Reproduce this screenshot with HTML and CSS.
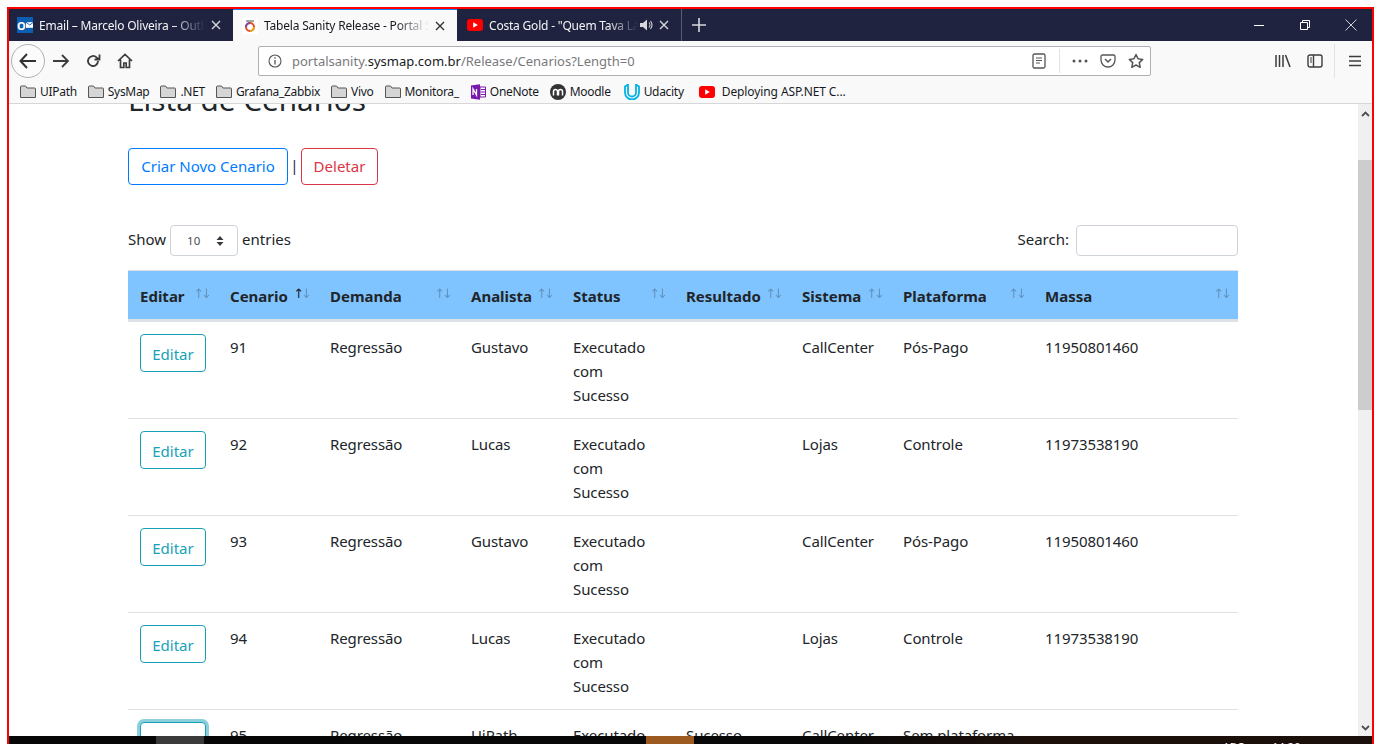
FILE: index.html
```html
<!DOCTYPE html>
<html lang="pt-BR">
<head>
<meta charset="utf-8">
<title>Tabela Sanity Release - Portal Sanity</title>
<link rel="stylesheet" href="styles.css">
</head>
<body>
<div class="window">
  <div class="tabbar">
    <div class="tab">
      <span class="fav outlook"><b>O</b><svg width="8" height="8" viewBox="0 0 8 8"><rect x="0" y="1" width="8" height="6" fill="#fff"/><path d="M0 1l4 3 4-3" fill="none" stroke="#0a5fb0"/></svg></span>
      <span class="tab-label">Email – Marcelo Oliveira – Outlook</span>
      <svg class="tab-x" width="10" height="10" viewBox="0 0 10 10"><path d="M1 1l8 8M9 1l-8 8"/></svg>
    </div>
    <div class="tab active">
      <span class="fav"><svg width="16" height="16" viewBox="0 0 16 16"><rect width="16" height="16" fill="#fff"/><circle cx="8" cy="9" r="4" fill="none" stroke="#e2502a" stroke-width="2"/><path d="M4 9a4 4 0 0 1 4-4" fill="none" stroke="#7b4fa0" stroke-width="2"/><path d="M8 13a4 4 0 0 0 4-4" fill="none" stroke="#e8a91c" stroke-width="2"/><path d="M4 3h8" stroke="#888" stroke-width="1.5"/></svg></span>
      <span class="tab-label">Tabela Sanity Release - Portal Sanity</span>
      <svg class="tab-x" width="10" height="10" viewBox="0 0 10 10"><path d="M1 1l8 8M9 1l-8 8"/></svg>
    </div>
    <div class="tab">
      <span class="fav"><svg width="16" height="12" viewBox="0 0 16 12"><rect width="16" height="12" rx="3" fill="#f00"/><path d="M6.2 3.2l4.6 2.8-4.6 2.8z" fill="#fff"/></svg></span>
      <span class="tab-label short">Costa Gold - "Quem Tava Lá"</span>
      <svg class="tab-sound" width="14" height="14" viewBox="0 0 14 14"><path d="M1 5h3l4-3.5v11L4 9H1z" fill="#d8d8dc"/><path d="M10 4.5c1.2 1.3 1.2 3.7 0 5M11.5 3c2 2.2 2 5.800 0 8" fill="none" stroke="#d8d8dc" stroke-width="1.100"/></svg>
      <svg class="tab-x" width="10" height="10" viewBox="0 0 10 10"><path d="M1 1l8 8M9 1l-8 8"/></svg>
    </div>
    <div class="newtab"><svg width="14" height="14" viewBox="0 0 14 14"><path d="M7 0v14M0 7h14" stroke="#d8d8dc" stroke-width="1.600"/></svg></div>
    <div class="winctrls">
      <svg width="12" height="12" viewBox="0 0 12 12"><path d="M1 6.500h10" stroke="#fff"/></svg>
      <svg width="12" height="12" viewBox="0 0 12 12"><path d="M3.500 3.500V1.500h7v7h-2M1.500 3.500h7v7h-7z" fill="none" stroke="#fff"/></svg>
      <svg width="12" height="12" viewBox="0 0 12 12"><path d="M.5.500l11 11M11.500.500l-11 11" stroke="#fff" stroke-width=".8"/></svg>
    </div>
  </div>

  <div class="toolbar">
    <span class="backbtn"><svg width="18" height="16" viewBox="0 0 18 16"><path d="M8 1L1.500 8 8 15M1.500 8H17" fill="none" stroke="#333" stroke-width="2"/></svg></span>
    <svg class="tool" width="16" height="14" viewBox="0 0 16 14"><path d="M9 1l6 6-6 6M15 7H0" fill="none" stroke="#3c3c3e" stroke-width="1.800"/></svg>
    <svg class="tool" width="16" height="16" viewBox="0 0 16 16"><path d="M13 8a5 5 0 1 1-1.500-3.600L14 6.500M14.500 1.500v5h-5" fill="none" stroke="#3c3c3e" stroke-width="1.800"/></svg>
    <svg class="tool" width="16" height="16" viewBox="0 0 16 16"><path d="M1 8l7-6.500L15 8M3.500 6.500V14.500h3.300v-4.500h2.400v4.500h3.300V6.500" fill="none" stroke="#3c3c3e" stroke-width="1.700"/></svg>
    <div class="urlbar">
      <svg class="url-info" width="14" height="14" viewBox="0 0 14 14"><circle cx="7" cy="7" r="6" fill="none" stroke="#55555a" stroke-width="1.100"/><path d="M7 6v4.500M7 3.300v1.500" stroke="#55555a" stroke-width="1.300"/></svg>
      <span class="url"><span class="dim">portalsanity.</span>sysmap.com.br<span class="dim">/Release/Cenarios?Length=0</span></span>
      <svg class="url-ic" width="14" height="16" viewBox="0 0 14 16"><rect x="1" y="1" width="12" height="14" rx="1.500" fill="none" stroke="#55555a" stroke-width="1.300"/><path d="M4 5h6M4 7.500h6M4 10h4" stroke="#55555a"/></svg>
      <span class="url-sep"></span>
      <svg class="url-ic dots" width="16" height="4" viewBox="0 0 16 4"><circle cx="2" cy="2" r="1.500" fill="#55555a"/><circle cx="8" cy="2" r="1.500" fill="#55555a"/><circle cx="14" cy="2" r="1.500" fill="#55555a"/></svg>
      <svg class="url-ic" width="16" height="14" viewBox="0 0 16 14"><path d="M2.500 1h11A1.500 1.500 0 0 1 15 2.500V6a7 7 0 0 1-14 0V2.500A1.500 1.500 0 0 1 2.500 1z" fill="none" stroke="#55555a" stroke-width="1.300"/><path d="M5 5l3 3 3-3" fill="none" stroke="#55555a" stroke-width="1.500"/></svg>
      <svg class="url-ic" width="16" height="16" viewBox="0 0 16 16"><path d="M8 1.500l2 4.300 4.700.6-3.400 3.200.9 4.700L8 12l-4.200 2.300.9-4.700L1.300 6.400 6 5.800z" fill="none" stroke="#55555a" stroke-width="1.500" stroke-linejoin="round"/></svg>
    </div>
    <div class="tools-right">
      <svg width="16" height="14" viewBox="0 0 16 14"><path d="M1 1v12M4.500 1v12M8 1v12M10.500 1l4.500 12" stroke="#3c3c3e" stroke-width="1.500"/></svg>
      <svg width="16" height="14" viewBox="0 0 16 14"><rect x="1" y="1" width="14" height="12" rx="2" fill="none" stroke="#3c3c3e" stroke-width="1.400"/><path d="M6.500 1v12" stroke="#3c3c3e" stroke-width="1.400"/><path d="M3 4h2M3 6h2M3 8h2" stroke="#3c3c3e"/></svg>
      <span class="tool-sep"></span>
      <svg width="12" height="12" viewBox="0 0 12 12"><path d="M0 1.500h12M0 6h12M0 10.500h12" stroke="#3c3c3e" stroke-width="1.600"/></svg>
    </div>
  </div>

  <div class="bookmarks">
    <span class="bm"><svg class="folder" width="16" height="14" viewBox="0 0 16 14"><path d="M.5 12.500V2a1 1 0 0 1 1-1h4l1.500 2h7.500a1 1 0 0 1 1 1v8.500z" fill="#d5d5d5" stroke="#555"/></svg>UIPath</span>
    <span class="bm"><svg class="folder" width="16" height="14" viewBox="0 0 16 14"><path d="M.5 12.500V2a1 1 0 0 1 1-1h4l1.500 2h7.500a1 1 0 0 1 1 1v8.500z" fill="#d5d5d5" stroke="#555"/></svg>SysMap</span>
    <span class="bm"><svg class="folder" width="16" height="14" viewBox="0 0 16 14"><path d="M.5 12.500V2a1 1 0 0 1 1-1h4l1.500 2h7.500a1 1 0 0 1 1 1v8.500z" fill="#d5d5d5" stroke="#555"/></svg>.NET</span>
    <span class="bm"><svg class="folder" width="16" height="14" viewBox="0 0 16 14"><path d="M.5 12.500V2a1 1 0 0 1 1-1h4l1.500 2h7.500a1 1 0 0 1 1 1v8.500z" fill="#d5d5d5" stroke="#555"/></svg>Grafana_Zabbix</span>
    <span class="bm"><svg class="folder" width="16" height="14" viewBox="0 0 16 14"><path d="M.5 12.500V2a1 1 0 0 1 1-1h4l1.500 2h7.500a1 1 0 0 1 1 1v8.500z" fill="#d5d5d5" stroke="#555"/></svg>Vivo</span>
    <span class="bm"><svg class="folder" width="16" height="14" viewBox="0 0 16 14"><path d="M.5 12.500V2a1 1 0 0 1 1-1h4l1.500 2h7.500a1 1 0 0 1 1 1v8.500z" fill="#d5d5d5" stroke="#555"/></svg>Monitora_</span>
    <span class="bm"><svg class="folder" width="16" height="16" viewBox="0 0 16 16"><path d="M1 1.500l9-1.200v15.400l-9-1.200z" fill="#7719aa"/><path d="M10 3h5.500v10H10z" fill="#fff" stroke="#7719aa"/><path d="M3 11V5l3.500 6V5" fill="none" stroke="#fff" stroke-width="1.300"/><path d="M11 5.500h4M11 8h4M11 10.500h4" stroke="#7719aa"/></svg>OneNote</span>
    <span class="bm"><svg class="folder" width="16" height="16" viewBox="0 0 16 16"><circle cx="8" cy="8" r="8" fill="#333"/><path d="M3.500 11.500V7.500a2 2 0 0 1 4 0v4M8.500 11.500V7.500a2 2 0 0 1 4 0v4" fill="none" stroke="#fff" stroke-width="1.500"/></svg>Moodle</span>
    <span class="bm udacity"><svg class="folder" width="16" height="16" viewBox="0 0 16 16"><path d="M1 2.500v6a7 7 0 0 0 14 0v-6l-3-2v8a4 4 0 0 1-8 0v-8z" fill="none" stroke="#02b3e4" stroke-width="1.800"/></svg>Udacity</span>
    <span class="bm yt"><svg class="folder" width="16" height="12" viewBox="0 0 16 12"><rect width="16" height="12" rx="3" fill="#f00"/><path d="M6.200 3.200l4.600 2.800-4.600 2.800z" fill="#fff"/></svg>Deploying ASP.NET C...</span>
  </div>

  <div class="viewport">
    <main class="page">
      <h2 class="title">Lista de Cenarios</h2>
      <p class="actions"><a class="btn btn-blue">Criar Novo Cenario</a><span class="pipe">|</span><a class="btn btn-red">Deletar</a></p>
      <div class="dt-controls">
        <label class="dt-length">Show <span class="select">10<svg width="8" height="12" viewBox="0 0 8 12"><path d="M4 1l3.500 4h-7zM4 11L.5 7h7z" fill="#343a40"/></svg></span> entries</label>
        <label class="dt-search">Search: <span class="input"></span></label>
      </div>
      <table class="grid">
        <colgroup>
          <col class="c1"><col class="c2"><col class="c3"><col class="c4"><col class="c5"><col class="c6"><col class="c7"><col class="c8"><col class="c9">
        </colgroup>
        <thead>
          <tr>
            <th>Editar<span class="sort"><i>↑</i><i>↓</i></span></th>
            <th>Cenario<span class="sort asc"><i>↑</i><i>↓</i></span></th>
            <th>Demanda<span class="sort"><i>↑</i><i>↓</i></span></th>
            <th>Analista<span class="sort"><i>↑</i><i>↓</i></span></th>
            <th>Status<span class="sort"><i>↑</i><i>↓</i></span></th>
            <th>Resultado<span class="sort"><i>↑</i><i>↓</i></span></th>
            <th>Sistema<span class="sort"><i>↑</i><i>↓</i></span></th>
            <th>Plataforma<span class="sort"><i>↑</i><i>↓</i></span></th>
            <th>Massa<span class="sort"><i>↑</i><i>↓</i></span></th>
          </tr>
        </thead>
        <tbody>
          <tr><td><a class="btn btn-teal">Editar</a></td><td>91</td><td>Regressão</td><td>Gustavo</td><td>Executado com Sucesso</td><td></td><td>CallCenter</td><td>Pós-Pago</td><td>11950801460</td></tr>
          <tr><td><a class="btn btn-teal">Editar</a></td><td>92</td><td>Regressão</td><td>Lucas</td><td>Executado com Sucesso</td><td></td><td>Lojas</td><td>Controle</td><td>11973538190</td></tr>
          <tr><td><a class="btn btn-teal">Editar</a></td><td>93</td><td>Regressão</td><td>Gustavo</td><td>Executado com Sucesso</td><td></td><td>CallCenter</td><td>Pós-Pago</td><td>11950801460</td></tr>
          <tr><td><a class="btn btn-teal">Editar</a></td><td>94</td><td>Regressão</td><td>Lucas</td><td>Executado com Sucesso</td><td></td><td>Lojas</td><td>Controle</td><td>11973538190</td></tr>
          <tr><td><a class="btn btn-teal focus">Editar</a></td><td>95</td><td>Regressão</td><td>UiPath</td><td>Executado com Sucesso</td><td>Sucesso</td><td>CallCenter</td><td>Sem plataforma</td><td></td></tr>
        </tbody>
      </table>
    </main>
    <div class="scrollbar">
      <svg class="arrow" width="9" height="6" viewBox="0 0 9 6"><path d="M1 5l3.500-3.500L8 5" fill="none" stroke="#505050" stroke-width="1.800"/></svg>
      <div class="thumb"></div>
      <svg class="arrow down" width="9" height="6" viewBox="0 0 9 6"><path d="M1 1l3.500 3.500L8 1" fill="none" stroke="#505050" stroke-width="1.800"/></svg>
    </div>
  </div>

  <div class="taskbar">
    <span class="task grey"></span>
    <span class="task brown"></span>
    <span class="tray">
      <span class="clip">ABC</span>
      <span class="clip">14:26</span>
    </span>
  </div>
</div>
</body>
</html>
```

FILE: styles.css
```css
* { box-sizing: border-box; }
html, body { margin: 0; height: 100%; background: #fff; overflow: hidden; }
body {
  padding: 7px 8px 0 7px;
  font-family: "Noto Sans", "Open Sans", "Liberation Sans", sans-serif;
  color: #212529;
}
.window {
  height: 737px;
  border: solid #f00;
  border-width: 2px 2px 0 2px;
  display: flex;
  flex-direction: column;
  overflow: hidden;
  background: #fff;
}

/* tabs */
.tabbar {
  height: 32px;
  flex: none;
  background: #202340;
  display: flex;
  align-items: stretch;
}
.tab {
  width: 224px;
  display: flex;
  align-items: center;
  padding: 0 12px 0 8px;
  color: #f4f4f6;
  font-size: 12px;
  letter-spacing: -.2px;
}
.tab:nth-child(3) { width: 225px; border-right: 1px solid #5a5c70; padding-left: 10px; padding-right: 12px; }
.tab.active {
  background: #f9f9fa;
  color: #18191e;
  border-top: 1px solid #0a84ff;
  padding-left: 9px;
}
.fav { width: 16px; height: 16px; flex: none; display: flex; align-items: center; justify-content: center; margin-right: 6px; }
.outlook { background: #0a5fb0; color: #fff; font-size: 11px; gap: 0; overflow: hidden; }
.outlook b { line-height: 1; margin-right: 0; }
.tab-label {
  flex: 1;
  min-width: 0;
  white-space: nowrap;
  overflow: hidden;
  -webkit-mask-image: linear-gradient(to right, #000 80%, transparent 100%);
  mask-image: linear-gradient(to right, #000 80%, transparent 100%);
}
.tab-x { flex: none; margin-left: 6px; fill: none; stroke: #d8d8dc; stroke-width: 1.400; }
.tab.active .tab-x { stroke: #333; }
.tab-sound { flex: none; margin-left: 1px; }
.newtab { width: 34px; display: flex; align-items: center; justify-content: center; }
.winctrls {
  margin-left: auto;
  display: flex;
  align-items: center;
  gap: 34px;
  padding-right: 15px;
}

/* toolbar */
.toolbar {
  height: 40px;
  flex: none;
  background: #f9f9fa;
  display: flex;
  align-items: center;
  padding: 0 11px 0 2px;
}
.backbtn {
  width: 34px;
  height: 34px;
  border: 1px solid #b1b1b3;
  border-radius: 50%;
  background: #fbfbfb;
  display: flex;
  align-items: center;
  justify-content: center;
  margin-right: 8px;
}
.tool { margin-right: 16px; flex: none; }
.urlbar {
  width: 893px;
  height: 30px;
  margin-left: 109px;
  background: #fff;
  border: 1px solid #b1b1b3;
  border-radius: 2px;
  display: flex;
  align-items: center;
  padding: 0 6px 0 9px;
}
.url-info { flex: none; margin-right: 10px; }
.url { flex: 1; font-size: 13px; color: #18191e; white-space: nowrap; }
.dim { color: #79797c; }
.url-ic { flex: none; margin-left: 12px; }
.url-sep { width: 1px; height: 24px; background: #e2e2e3; margin-left: 13px; }
.tools-right {
  margin-left: auto;
  display: flex;
  align-items: center;
  gap: 16px;
}
.tool-sep { width: 1px; height: 34px; background: #e2e2e3; margin: 0 -2px 0 -5px; }

/* bookmarks */
.bookmarks {
  height: 23px;
  flex: none;
  background: #f9f9fa;
  border-bottom: 1px solid #d7d7db;
  display: flex;
  align-items: center;
  padding: 0 0 1px 11px;
  font-size: 12px;
  letter-spacing: -.3px;
  color: #18191e;
  gap: 11px;
}
.bm { display: flex; align-items: center; white-space: nowrap; }
.folder { flex: none; margin-right: 4px; }
.udacity { margin-left: 2px; }
.yt { margin-left: 4px; letter-spacing: -.1px; }
.yt .folder { margin-right: 7px; }

/* page */
.viewport {
  flex: 1;
  min-height: 0;
  display: flex;
  overflow: hidden;
  background: #fff;
}
.page {
  flex: 1;
  min-width: 0;
  padding-left: 119px;
  font-size: 15px;
  overflow: hidden;
}
.title {
  margin: -19px 0 33px;
  font-size: 29.700px;
  font-weight: 400;
  line-height: 30px;
  height: 30px;
}
.actions {
  margin: 0 0 40px;
  display: flex;
  align-items: center;
  height: 37px;
  width: 1110px;
}
.pipe { width: 13px; text-align: center; margin-bottom: 4px; color: #1c2c5c; font-size: 15px; }
.btn {
  display: inline-flex;
  align-items: center;
  justify-content: center;
  border: 1px solid;
  border-radius: 4px;
  height: 100%;
  font-size: 15px;
  background: #fff;
  white-space: nowrap;
}
.btn-blue { width: 160px; color: #007bff; border-color: #007bff; padding-bottom: 1px; }
.btn-red { width: 77px; color: #dc3545; border-color: #dc3545; padding-bottom: 1px; }

.dt-controls {
  width: 1110px;
  height: 31px;
  margin-bottom: 14px;
  display: flex;
  justify-content: space-between;
  align-items: flex-start;
}
.dt-length, .dt-search { display: flex; align-items: flex-start; gap: 4px; line-height: 29px; }
.select {
  width: 68px;
  height: 31px;
  border: 1px solid #ced4da;
  border-radius: 4px;
  display: flex;
  align-items: center;
  justify-content: space-between;
  padding: 0 13px 0 16px;
  font-size: 11.500px;
  color: #495057;
}
.input {
  width: 162px;
  height: 31px;
  border: 1px solid #ced4da;
  border-radius: 4px;
  margin-left: 3px;
}

.grid {
  width: 1110px;
  table-layout: fixed;
  border-collapse: separate;
  border-spacing: 0;
}
.c1 { width: 90px; } .c2 { width: 100px; } .c3 { width: 141px; }
.c4 { width: 102px; } .c5 { width: 113px; } .c6 { width: 116px; }
.c7 { width: 101px; } .c8 { width: 142px; } .c9 { width: 205px; }
.grid th {
  height: 52px;
  background: #80c4ff;
  border-top: 1px solid #dee2e6;
  border-bottom: 3px solid #dee2e6;
  padding: 2px 12px 0;
  text-align: left;
  font-size: 15px;
  font-weight: 700;
  position: relative;
  white-space: nowrap;
  color: #212529;
}
.sort {
  position: absolute;
  right: 9px;
  top: 13px;
  font-size: 13px;
  line-height: 20px;
  font-family: "DejaVu Sans", sans-serif;
  font-weight: 400;
  color: #212529;
  white-space: nowrap;
  letter-spacing: -3px;
}
.sort i { font-style: normal; opacity: .3; }
.sort.asc i:first-child { opacity: 1; }
.grid td {
  height: 97px;
  padding: 13px 12px 11px;
  vertical-align: top;
  line-height: 24px;
  border-bottom: 1px solid #dee2e6;
  font-size: 15px;
  letter-spacing: -.1px;
}
.btn-teal {
  width: 66px;
  height: 38px;
  margin-top: -1px;
  padding-top: 2px;
  color: #17a2b8;
  border-color: #17a2b8;
  letter-spacing: 0;
}
.btn-teal.focus { box-shadow: 0 0 0 3px rgba(23,162,184,.5); }

/* scrollbar */
.scrollbar {
  width: 14px;
  flex: none;
  background: #f0f0f0;
  display: flex;
  flex-direction: column;
  align-items: center;
  padding-top: 7px;
}
.arrow { flex: none; }
.thumb { width: 14px; height: 250px; background: #cdcdcd; margin-top: 43px; }
.arrow.down { margin-top: auto; margin-bottom: 5px; }

/* taskbar */
.taskbar {
  height: 8px;
  flex: none;
  background: linear-gradient(to right, #060606 0, #080808 60%, #1c0f0a 75%, #1a0f0a 100%);
  display: flex;
  overflow: hidden;
  padding-left: 147px;
}
.task { height: 8px; width: 48px; flex: none; }
.grey { background: #3a3a3a; }
.brown { background: #9c5a20; margin-left: 442px; }
.tray {
  margin-left: auto;
  padding-right: 72px;
  display: flex;
  gap: 28px;
  color: #fff;
  font-size: 11px;
  line-height: 16px;
  padding-top: 3px;
}
.clip { white-space: nowrap; }
```
